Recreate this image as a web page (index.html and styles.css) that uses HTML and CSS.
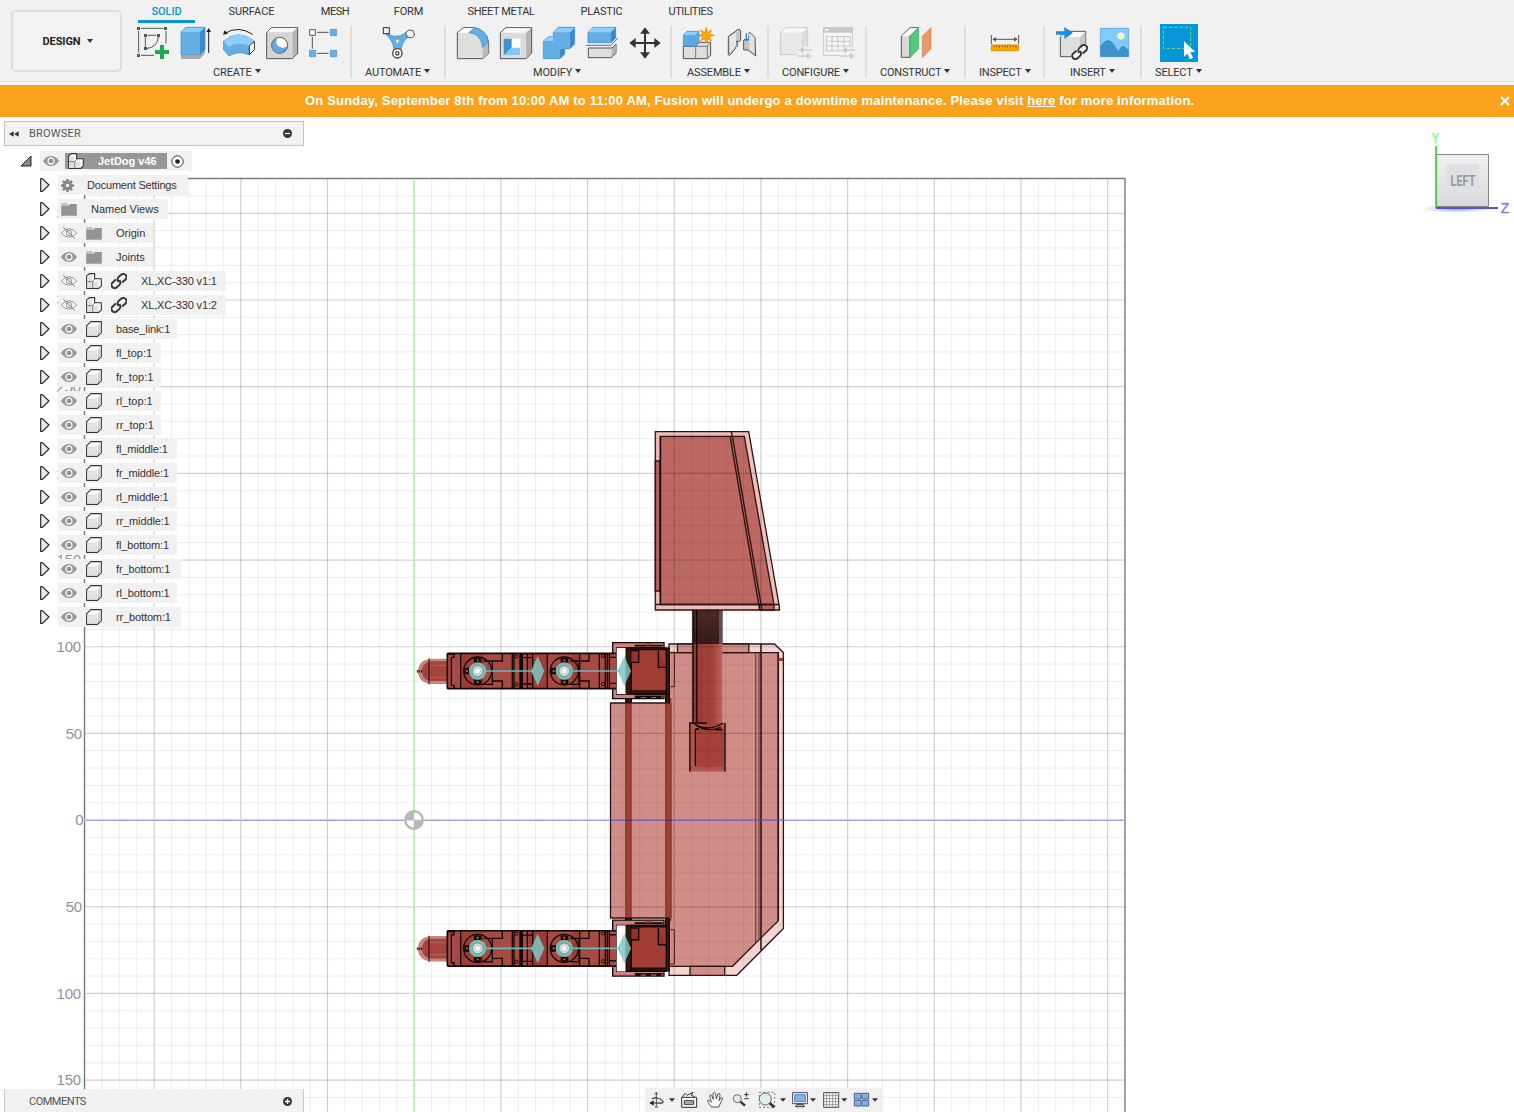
FILE: index.html
```html
<!DOCTYPE html>
<html lang="en">
<head>
<meta charset="utf-8">
<title>JetDog v46</title>
<link rel="stylesheet" href="styles.css">
</head>
<body>
<svg class="defs" width="0" height="0">
  <defs>
    <symbol id="eye" viewBox="0 0 48 32"><path d="M0 16Q10 1 24 1T48 16Q38 31 24 31T0 16Z" fill="#949494"/><circle cx="24" cy="16" r="9" fill="none" stroke="#f2f2f2" stroke-width="4"/></symbol>
    <symbol id="eye-off" viewBox="0 0 48 36"><path d="M1 18Q11 5 24 5T47 18Q37 31 24 31T1 18Z" fill="none" stroke="#999" stroke-width="3"/><circle cx="24" cy="18" r="8" fill="none" stroke="#999" stroke-width="3"/><path d="M7 1L42 35" stroke="#777" stroke-width="3"/></symbol>
    <symbol id="folder" viewBox="0 0 48 40"><path d="M0 1H20V5H0Z" fill="#aaa"/><path d="M0 8H23L27 3H48V39H0Z" fill="#949494"/></symbol>
    <symbol id="box" viewBox="0 0 50 50"><path d="M2 15L15 2H48V36L36 48H2Z" fill="#fff" stroke="#333" stroke-width="3.4" stroke-linejoin="round"/><path d="M5 17H34V45H5Z" fill="#e0e1e6"/><path d="M36 16L46 6V35L36 45Z" fill="#cfd0d6"/></symbol>
    <symbol id="parts" viewBox="0 0 50 50"><path d="M2 10L10 2H27V18H48V40L40 48H2Z" fill="#fafafc" stroke="#333" stroke-width="3.4" stroke-linejoin="round"/><path d="M4 28H19V46H4ZM23 28H38V46H23ZM4 12H19V26H4Z" fill="#e0e1e6"/><path d="M21 46V26L28 19M4 27H20" fill="none" stroke="#555" stroke-width="2.4"/></symbol>
    <symbol id="link" viewBox="0 0 50 50"><g fill="none" stroke="#333" stroke-width="6" transform="rotate(-42 25 25)"><path d="M21 15H7A10 10 0 0 0 7 35H17Q26 35 28 24M29 35H43A10 10 0 0 0 43 15H33Q24 15 22 26"/></g></symbol>
    <symbol id="tri" viewBox="0 0 30 42"><path d="M2 2H7L27 21L7 40H2Z" fill="#e6e7ea" stroke="#222" stroke-width="3.4" stroke-linejoin="round"/></symbol>
    <symbol id="sliders" viewBox="0 0 45 38"><path d="M0 11H42M0 29H42" stroke="#ccc" stroke-width="4"/><path d="M14 3V19" stroke="#a8cdeb" stroke-width="6"/><path d="M31 21V37" stroke="#c4c4c4" stroke-width="5"/></symbol>
  </defs>
</svg>

<header class="ribbon">
  <button class="workspace-button">DESIGN<i class="caret"></i></button>
  <div class="ribbon-main">
    <nav class="tabs">
      <span class="tab tab-solid">SOLID</span><span class="tab tab-surface">SURFACE</span><span class="tab tab-mesh">MESH</span><span class="tab tab-form">FORM</span><span class="tab tab-sheet">SHEET METAL</span><span class="tab tab-plastic">PLASTIC</span><span class="tab tab-utilities">UTILITIES</span>
    </nav>
    <div class="groups">
      <section class="group g-create">
        <div class="icons">
          <svg class="tool" viewBox="411 78 102 102"><g fill="none" stroke="#555" stroke-width="3"><path d="M423 85H490M416 93V158M498 93V130M423 166H462M436 112V140M443 106H468M475 110Q474 140 440 146"/></g><path d="M411 81h9v9h-9zM492 81h9v9h-9zM411 162h9v9h-9zM432 102h9v9h-9zM471 102h9v9h-9zM432 141h9v9h-9z" fill="#555"/><path d="M480 135H492V150H507V162H492V177H480V162H465V150H480Z" fill="#1eaa4b"/></svg>
          <svg class="tool" viewBox="540 78 102 102"><path d="M543 165H597L615 148V160L599 177H543Z" fill="#aaa"/><path d="M543 96L558 82H615L600 96V164H543Z" fill="#64aee6"/><path d="M543 96L558 82H615L600 96Z" fill="#8ccfff"/><path d="M600 96L615 82V148L600 164Z" fill="#3f8bc8"/><path d="M543 96L558 82H615V148L600 164H543Z" fill="none" stroke="#3d86c2" stroke-width="2"/><path d="M626 159V92" stroke="#222" stroke-width="3"/><path d="M619 96L626 84L633 96Z" fill="#222"/></svg>
          <svg class="tool" viewBox="669 78 102 102"><path d="M676 99Q716 76 758 103" fill="none" stroke="#222" stroke-width="3"/><path d="M669 104L674 91L684 101Z" fill="#222"/><path d="M670 124Q716 84 763 124V147L748 165Q716 150 687 168L670 148Z" fill="#64aee6" stroke="#3d86c2" stroke-width="2"/><path d="M671 124Q716 84 762 124L748 138Q716 124 685 140Z" fill="#8ccfff"/><path d="M748 137L763 124V149L748 164Z" fill="#fff" stroke="#333" stroke-width="3"/></svg>
          <svg class="tool" viewBox="798 78 102 102"><path d="M800 97L814 83H893V160L877 176H800Z" fill="#d5d5d5" stroke="#555" stroke-width="3"/><path d="M801 97L815 84H891L877 97Z" fill="#f6f6f6"/><path d="M878 97L891 85V160L878 174Z" fill="#b5b5b5"/><circle cx="839" cy="136" r="24" fill="#fff" stroke="#555" stroke-width="3"/><path d="M829 116A22 22 0 1 0 860 142Q847 149 835 140T829 116Z" fill="#60aae2" stroke="#3d86c2" stroke-width="2"/></svg>
          <svg class="tool" viewBox="927 78 102 102"><path d="M951 97H986M937 110V146M951 160H986" stroke="#555" stroke-width="3"/><path d="M929 89H946V106H929Z" fill="#fff" stroke="#555" stroke-width="3"/><path d="M991 88h19v19h-19zM991 151h19v19h-19zM928 151h19v19h-19z" fill="#64aee6" stroke="#4894d0" stroke-width="2"/></svg>
        </div>
        <div class="group-label">CREATE<i class="caret"></i></div>
      </section>
      <section class="group g-automate">
        <div class="icons">
          <svg class="tool" viewBox="1146 78 102 102"><path d="M1163 100Q1184 113 1190 107Q1198 112 1220 96L1230 108Q1205 122 1203 153L1206 162Q1192 180 1179 162L1182 150Q1181 124 1156 101Z" fill="#64aee6" stroke="#3d86c2" stroke-width="2"/><path d="M1184 118H1201L1192 135Z" fill="#fff" stroke="#3d86c2" stroke-width="2"/><rect x="1150" y="83" width="18" height="18" fill="#f2f2f2" stroke="#333" stroke-width="3"/><path d="M1226 90L1239 92L1244 105L1235 114L1222 111L1217 99Z" fill="#f2f2f2" stroke="#555" stroke-width="3"/><circle cx="1192" cy="160" r="14" fill="#fff" stroke="#444" stroke-width="4"/><circle cx="1192" cy="160" r="5" fill="none" stroke="#444" stroke-width="4"/></svg>
        </div>
        <div class="group-label">AUTOMATE<i class="caret"></i></div>
      </section>
      <section class="group g-modify">
        <div class="icons">
          <svg class="tool" viewBox="48 78 102 102"><path d="M52 98L70 83H102Q140 90 146 128V160L128 176H52Z" fill="#dedede" stroke="#555" stroke-width="3"/><path d="M54 98L71 85H102L86 98Z" fill="#fff"/><path d="M128 142L145 127V160L128 174Z" fill="#bbb"/><path d="M86 98L105 83Q140 90 146 127L128 142Q123 100 86 98Z" fill="#64aee6" stroke="#3d86c2" stroke-width="2"/></svg>
          <svg class="tool" viewBox="177 78 102 102"><path d="M181 98L197 83H275V160L258 176H181Z" fill="#dadada" stroke="#555" stroke-width="3"/><path d="M183 98L198 85H273L258 98Z" fill="#f7f7f7"/><path d="M258 98L273 85V160L258 174Z" fill="#b5b5b5"/><path d="M191 116H241V165H191Z" fill="#fff"/><path d="M191 116H215V143L193 165H191Z" fill="#3f91d0"/><path d="M193 165L215 143H240V165Z" fill="#82c6fa"/></svg>
          <svg class="tool" viewBox="306 78 102 102"><path d="M310 123L325 110H340V97L354 82H404V132L390 146H374V162L360 176H310Z" fill="#64aee6" stroke="#3d86c2" stroke-width="2"/><path d="M340 97L355 84H402L390 97ZM311 123L325 111H340V123Z" fill="#8ccfff"/><path d="M390 97L403 84V132L390 145ZM360 147H374V162L360 175Z" fill="#3f8bc8"/></svg>
          <svg class="tool" viewBox="435 78 102 102"><path d="M444 97L459 82H527V114L513 128H444Z" fill="#64aee6" stroke="#3d86c2" stroke-width="2"/><path d="M444 97L459 83H526L513 97Z" fill="#8ccfff"/><path d="M513 97L527 83V114L513 128Z" fill="#3f8bc8"/><path d="M438 136H513L534 114" fill="none" stroke="#0f86df" stroke-width="3"/><path d="M445 144H516L528 132V160L513 173H445Z" fill="#dedede" stroke="#555" stroke-width="3"/><path d="M515 146L527 134V159L515 170Z" fill="#b5b5b5"/></svg>
          <svg class="tool" viewBox="564 78 102 102"><path d="M615 92V168M578 129H652" stroke="#333" stroke-width="6"/><path d="M615 82L630 101H600ZM615 176L630 157H600ZM568 129L587 114V144ZM662 129L643 114V144Z" fill="#333"/></svg>
        </div>
        <div class="group-label">MODIFY<i class="caret"></i></div>
      </section>
      <section class="group g-assemble">
        <div class="icons">
          <svg class="tool" viewBox="726 78 102 102"><path d="M730 139H766L778 127H812V165L802 176H730Z" fill="#ddd" stroke="#555" stroke-width="3"/><path d="M767 139V176M767 139H802L811 130M802 139V175" fill="none" stroke="#777" stroke-width="3"/><path d="M730 105L741 94H777V128L766 139H730Z" fill="#5da8e0" stroke="#3d86c2" stroke-width="2"/><path d="M731 105L741 95H776L766 105Z" fill="#8ccfff"/><path d="M799 82L803 97L815 90L808 102L823 106L808 110L815 123L803 116L799 131L794 116L781 123L788 110L774 106L789 102L781 90L794 97Z" fill="#ffa900" stroke="#dc8b00" stroke-width="2"/></svg>
          <svg class="tool" viewBox="855 78 102 102"><path d="M865 109L888 93Q890 87 899 88L902 92V121Q897 128 889 123L887 145L868 167L865 163Z" fill="#c7c7c7" stroke="#555" stroke-width="3"/><path d="M869 112L888 98V138L869 158Z" fill="#e6e6e6"/><path d="M892 124V141M919 100V120" stroke="#0b8aed" stroke-width="3"/><path d="M911 120Q918 115 926 120L928 96L945 112L947 168L924 150H911Z" fill="#c7c7c7" stroke="#555" stroke-width="3"/><path d="M928 98L943 112V161L928 149Z" fill="#e2e2e2"/><path d="M919 101V122M914 117L919 123L925 117" fill="none" stroke="#0b8aed" stroke-width="3"/></svg>
        </div>
        <div class="group-label">ASSEMBLE<i class="caret"></i></div>
      </section>
      <section class="group g-configure">
        <div class="icons">
          <svg class="tool" viewBox="57 78 102 102"><path d="M61 98L76 83H143V140L123 164H61Z" fill="#e8e8e8" stroke="#c9c9c9" stroke-width="3"/><path d="M63 98L77 85H142L127 98Z" fill="#f7f7f7"/><path d="M125 99L142 84V140H125Z" fill="#ddd"/><path d="M112 140H159V180H112Z" fill="#f1f1f1"/><use href="#sliders" x="113" y="139" width="45" height="38"/></svg>
          <svg class="tool" viewBox="186 78 102 102"><path d="M191 83H277V166H191Z" fill="#f6f6f6" stroke="#c9c9c9" stroke-width="3"/><path d="M190 82H278V98H190Z" fill="#c6c6c6"/><path d="M195 87H206V92H195Z" fill="#fff"/><path d="M199 110H270V153H199ZM199 124H270M199 138H270M216 110V153M234 110V153M252 110V153" fill="none" stroke="#c4c4c4" stroke-width="3"/><path d="M242 140H288V180H242Z" fill="#f1f1f1"/><use href="#sliders" x="242" y="139" width="45" height="38"/></svg>
        </div>
        <div class="group-label">CONFIGURE<i class="caret"></i></div>
      </section>
      <section class="group g-construct">
        <div class="icons">
          <svg class="tool" viewBox="420 78 102 102"><path d="M424 108L450 83H474L450 108V172H424Z" fill="#d9d9d9" stroke="#555" stroke-width="3"/><path d="M426 108L451 85H473L449 108Z" fill="#fff"/><path d="M450 108L476 83V146L450 173Z" fill="#58c77e" stroke="#36a95f" stroke-width="2"/><path d="M487 108L513 83V146L487 173Z" fill="#e69a68" stroke="#d57f48" stroke-width="2"/></svg>
        </div>
        <div class="group-label">CONSTRUCT<i class="caret"></i></div>
      </section>
      <section class="group g-inspect">
        <div class="icons">
          <svg class="tool" viewBox="684 78 102 102"><path d="M694 105V132M776 105V132M700 118H770" stroke="#555" stroke-width="3"/><path d="M697 118L708 111V125ZM773 118L762 111V125Z" fill="#555"/><path d="M694 135H776V152H694Z" fill="#ffaa05" stroke="#e19200" stroke-width="3"/><path d="M702 136V142M710 136V142M718 136V145M727 136V142M735 136V142M743 136V145M752 136V142M760 136V142M768 136V145" stroke="#644400" stroke-width="2"/></svg>
        </div>
        <div class="group-label">INSPECT<i class="caret"></i></div>
      </section>
      <section class="group g-insert">
        <div class="icons">
          <svg class="tool" viewBox="885 78 102 102"><path d="M901 111L919 94H977V150L958 170H901Z" fill="#dedede" stroke="#555" stroke-width="3"/><path d="M903 111L920 96H975L960 111Z" fill="#fafafa"/><path d="M960 111L976 96V150L960 168Z" fill="#c8c8c8"/><path d="M888 94H913V81L939 99L913 117V104H888Z" fill="#188ce5"/><path d="M934 160L968 132H986V180H934Z" fill="#f1f1f1"/><use href="#link" x="933" y="132" width="52" height="48"/></svg>
          <svg class="tool" viewBox="1014 78 102 102"><path d="M1021 85H1106V170H1021Z" fill="#80caff" stroke="#4a9bd5" stroke-width="2"/><path d="M1021 138Q1046 104 1065 138L1075 153Q1084 134 1093 139L1106 151V170H1021Z" fill="#3e91cc"/><circle cx="1083" cy="108" r="10" fill="#fff9b0" stroke="#fff" stroke-width="2"/></svg>
        </div>
        <div class="group-label">INSERT<i class="caret"></i></div>
      </section>
      <section class="group g-select">
        <div class="icons">
          <svg class="tool tool-active" viewBox="1200 72 114 114"><path d="M1200 72H1314V186H1200Z" fill="#0696d7"/><path d="M1210 82H1292V146H1210Z" fill="none" stroke="#6bdc86" stroke-width="3" stroke-dasharray="11 5"/><path d="M1272 124V170L1282 161L1290 178L1299 173L1291 157L1305 155Z" fill="#fff"/></svg>
        </div>
        <div class="group-label">SELECT<i class="caret"></i></div>
      </section>
    </div>
  </div>
</header>

<div class="banner"><p>On Sunday, September 8th from 10:00 AM to 11:00 AM, Fusion will undergo a downtime maintenance. Please visit <a>here</a> for more information.</p><svg class="close" viewBox="0 0 10 10"><path d="M1 1L9 9M9 1L1 9" stroke="#fff" stroke-width="2.2"/></svg></div>

<main class="workspace">
  <svg class="viewport" viewBox="0 117 1514 995">
    <defs>
      <linearGradient id="neck" x1="0" x2="1"><stop offset="0" stop-color="#8d352f"/><stop offset=".2" stop-color="#9c3c35"/><stop offset=".7" stop-color="#a4443d"/><stop offset="1" stop-color="#bb6660"/></linearGradient>
      <linearGradient id="neckdark" x1="0" x2="0" y1="0" y2="1"><stop offset="0" stop-color="#4d2a29"/><stop offset="1" stop-color="#341b1a"/></linearGradient>
      <g id="servo">
        <circle cx="233" cy="123" r="42" fill="none" stroke="#140806" stroke-width="4"/>
        <g fill="#b6554c" stroke="#140806" stroke-width="5"><circle cx="233" cy="91" r="6"/><circle cx="233" cy="156" r="6"/><circle cx="201" cy="123" r="6"/></g>
        <path d="M224 84V98M243 84V98M224 148V162M243 148V162M193 115H207M193 131H207M250 93H277V163H250M277 93H307V70M277 153H307V176" fill="none" stroke="#140806" stroke-width="4"/>
        <path d="M257 123H400" stroke="#68bab5" stroke-width="5"/>
        <circle cx="233" cy="123" r="26" fill="#72bbb6"/><circle cx="233" cy="123" r="16" fill="#ddd" stroke="#777" stroke-width="2"/><circle cx="233" cy="123" r="9" fill="#fff" stroke="#aaa" stroke-width="2"/>
        <path d="M413 79L433 123L413 167L393 123Z" fill="#7cc7c3" fill-opacity=".85"/>
      </g>
      <g id="leg">
        <path d="M142 86H90Q54 92 54 124T90 162H142Z" fill="#c8837e"/>
        <path d="M142 94H90Q66 100 66 124T90 153H142Z" fill="#a4443c"/><path d="M90 106H142M90 142H142" stroke="#b6665f" stroke-width="3"/>
        <path d="M87 85V163M52 120V128M58 120V128M64 120V128" stroke="#140806" stroke-width="3"/>
        <path d="M638 38H792V54H650V192H792V206H638Z" fill="#cd827d" stroke="#140806" stroke-width="4"/>
        <path d="M650 54H678V192H650Z" fill="#fff"/>
        <path d="M142 70H648V176H142Z" fill="#a54b43"/>
        <path d="M182 70H250V176H182ZM385 70H442V176H385ZM516 70H538V176H516Z" fill="#98362f" fill-opacity=".6"/>
        <path d="M142 70H648M142 176H648M142 70V176" fill="none" stroke="#140806" stroke-width="5"/>
        <path d="M146 73H162V82H154V166H162V174M182 70V176M337 70V176M342 70V176M360 70V176M363 70V176M367 70V176M382 70V176M398 70V176M442 70V176M539 70V176M598 70V176M616 70V176M622 70V176M628 70V176M367 83H398M367 162H398M628 82H648M628 160H648" fill="none" stroke="#140806" stroke-width="4"/>
        <g fill="none" stroke="#140806" stroke-width="3"><circle cx="349" cy="79" r="5"/><circle cx="349" cy="163" r="5"/><circle cx="609" cy="78" r="5"/><circle cx="609" cy="162" r="5"/></g>
        <path d="M678 54H694V191H678ZM797 54H808V191H797Z" fill="#381511" stroke="#140806" stroke-width="3"/>
        <path d="M811 67H823V170H811" fill="none" stroke="#3c1b18" stroke-width="3"/>
        <path d="M694 54H799V192H694Z" fill="#a13c34" stroke="#140806" stroke-width="4"/>
        <path d="M694 58H799M694 183H799M694 189H799" fill="none" stroke="#140806" stroke-width="5"/>
        <path d="M704 47H788M704 199H788" stroke="#140806" stroke-width="5"/><path d="M706 203H722M738 203H753M769 203H783" stroke="#140806" stroke-width="6"/>
        <path d="M694 62H716V97H694M775 62V112H798" fill="#963129" stroke="#140806" stroke-width="4"/>
        <path d="M738 40H753V47H738Z" fill="#a13c34"/>
        <use href="#servo"/><use href="#servo" x="260"/>
      </g>
    </defs>

    <g class="axis-labels">
      <text x="81" y="218.500">350</text><text x="81" y="304.500">300</text><text x="81" y="391.500">250</text><text x="81" y="478.500">200</text><text x="81" y="564.500">150</text><text x="81" y="651.500">100</text><text x="82" y="738.500">50</text><text x="83.500" y="824.500">0</text><text x="82" y="911.500">50</text><text x="81" y="998.500">100</text><text x="81" y="1084.500">150</text>
    </g>

    <g class="body" stroke="#2b1513" stroke-width="1.300">
      <path d="M669 644H774.5L783.4 652.5V928.5L736.8 975.3H669Z" fill="#f3d5d3"/>
      <path d="M669 652.7H778.3V920.7L732.5 966.3H669Z" fill="#d08d88"/>
      <path d="M677.5 644H748.8V652.7H677.5ZM690 966.3H724.7V975.3H690Z" fill="#d08d88"/>
      <path d="M610.5 703H669V918H610.5Z" fill="#d08d88"/>
      <path d="M669 700H673V920H669Z" fill="#d08d88" stroke="none"/>
      <path d="M755.7 653V943M759 653V940" fill="none" stroke="#754744"/>
      <path d="M761 644V950M778.3 653V920" fill="none" stroke-width="1.5"/>
      <path d="M778.5 658H783V661H778.5Z" fill="#a13c34" stroke="none"/>
      <path d="M692.7 610H722.3V723H692.7Z" fill="url(#neck)" stroke="none"/>
      <path d="M692.7 610H722.3V644H692.7Z" fill="url(#neckdark)" stroke="none"/>
      <path d="M719 610H722.5V644H719Z" fill="#655050" stroke="none"/>
      <path d="M693 610V723M696.7 610V723" fill="none" stroke="#140806" stroke-width="1.4"/>
      <path d="M689.8 722.7H725V771.5H689.8Z" fill="#b25750" stroke="none"/>
      <path d="M695 729H724V767H695Z" fill="#a3413a" stroke="none"/>
      <path d="M693 723Q707 733 723 723" fill="#a4443d" stroke="none"/>
      <path d="M689.8 771.5V723H707M725 771.5V723M695.3 766V729M693 723Q707 733 723 723M696 725.5Q708 733 721 727" fill="none" stroke="#140806" stroke-width="1.3"/>
      <path d="M695.500 729H699M715.500 729.5H722" stroke="#140806" stroke-width="1.800"/>
      <path d="M655.3 431.7H748.7L779.4 607V610H655.3Z" fill="#eebfbd"/>
      <path d="M660.4 436.4H744.3L774 604.5H660.4Z" fill="#bd6863"/>
      <path d="M655.3 461H660V591H655.3ZM759.5 604.5H774V610H759.5Z" fill="#b86059"/>
      <path d="M655.3 604.5H779M730 436L759.7 610M731.2 431.7L732.3 436L762 610" fill="none" stroke-width="1.4"/>
      <path d="M660.4 436V604.5" stroke="#140806" stroke-width="1.5"/>
    </g>

    <g class="grid" fill="none">
      <path d="M84.2 645.5H1125" stroke-width="933" stroke-dasharray="1.2 16.137"/>
      <path d="M604.7 178V1112" stroke-width="1040" stroke-dasharray="1.2 16.137"/>
      <path class="major" d="M153.5 645.5H1125" stroke-width="933" stroke-dasharray="1.2 85.485"/>
      <path class="major" d="M604.7 212.7V1112" stroke-width="1040" stroke-dasharray="1.2 85.485"/>
    </g>
    <path d="M84.5 1112V178.5H1125V1112" fill="none" stroke="#7b7b7b" stroke-width="1.4"/>
    <path d="M414 179V1112" stroke="#fff" stroke-width="2"/>
    <path d="M414 179V1112" stroke="#6eee63" stroke-opacity=".55" stroke-width="1.800"/>
    <path d="M84 820.3H610M784 820.3H1125" stroke="#fff" stroke-width="2"/>
    <path d="M84 820.3H1125" stroke="#5555ea" stroke-opacity=".55" stroke-width="1.600"/>
    <path d="M625.3 698H631.5V921H625.3ZM665.3 698H671.5V921H665.3Z" fill="#9d4038"/>
    <path d="M626 703V918M631 703V918M666 703V918M671 703V918" stroke="#7b2b25" stroke-width=".8"/>
    <path d="M625 819.7H632V821H625ZM665 819.7H672V821H665Z" fill="#6b353f"/>
    <g class="origin"><circle cx="414" cy="820" r="8.8" fill="#fff" fill-opacity=".6" stroke="#b9b9b9" stroke-width="2.4"/><path d="M414 820V811A9 9 0 0 0 405 820ZM414 820V829A9 9 0 0 0 423 820Z" fill="#b9b9b9"/></g>
    <path d="M625.500 690H631.500V703H625.500ZM665.500 690H669.500V703H665.500Z" fill="#381511" stroke="#140806"/>
    <path d="M625.500 918H631.500V930H625.500ZM665.500 918H669.500V930H665.500Z" fill="#381511" stroke="#140806"/>
    <use href="#leg" transform="translate(400 630) scale(.33333)"/>
    <use href="#leg" transform="translate(400 907.4) scale(.33333)"/>
  </svg>

  <div class="overlay">
    <div class="overlay-top">
      <aside class="browser">
        <div class="panel-head"><svg class="collapse" viewBox="0 0 30 16"><path d="M0 8L14 0V16ZM15 8L29 0V16Z" fill="#333"/></svg><span class="panel-title">BROWSER</span><svg class="dot" viewBox="0 0 28 28"><circle cx="14" cy="14" r="14" fill="#333"/><path d="M6 14H22" stroke="#fff" stroke-width="4"/></svg></div>
        <ul class="tree">
          <li class="row root"><svg class="open" viewBox="0 0 36 36"><path d="M33 3V33H3Z" fill="#888" stroke="#222" stroke-width="3"/></svg><div class="chip"><svg class="eye"><use href="#eye"/></svg><div class="selected"><svg class="ico"><use href="#parts"/></svg><b>JetDog v46</b></div><svg class="radio" viewBox="0 0 39 39"><circle cx="19.500" cy="19.500" r="17" fill="#fff" stroke="#333" stroke-width="3"/><circle cx="19.500" cy="19.500" r="7" fill="#222"/></svg></div></li>
          <li class="row"><svg class="tri"><use href="#tri"/></svg><div class="chip w-doc"><svg class="gear" viewBox="0 0 40 40"><circle cx="20" cy="20" r="10" fill="none" stroke="#858585" stroke-width="9"/><path d="M20 0V8M20 32V40M0 20H8M32 20H40M6 6L12 12M28 28L34 34M34 6L28 12M12 28L6 34" stroke="#858585" stroke-width="8"/></svg><span>Document Settings</span></div></li>
          <li class="row"><svg class="tri"><use href="#tri"/></svg><div class="chip w-views"><svg class="folder"><use href="#folder"/></svg><span>Named Views</span></div></li>
          <li class="row"><svg class="tri"><use href="#tri"/></svg><div class="chip w-folder"><svg class="eye"><use href="#eye-off"/></svg><svg class="folder"><use href="#folder"/></svg><span>Origin</span></div></li>
          <li class="row"><svg class="tri"><use href="#tri"/></svg><div class="chip w-folder"><svg class="eye"><use href="#eye"/></svg><svg class="folder"><use href="#folder"/></svg><span>Joints</span></div></li>
          <li class="row"><svg class="tri"><use href="#tri"/></svg><div class="chip w-linked"><svg class="eye"><use href="#eye-off"/></svg><svg class="ico"><use href="#parts"/></svg><svg class="ico"><use href="#link"/></svg><span>XL,XC-330 v1:1</span></div></li>
          <li class="row"><svg class="tri"><use href="#tri"/></svg><div class="chip w-linked"><svg class="eye"><use href="#eye-off"/></svg><svg class="ico"><use href="#parts"/></svg><svg class="ico"><use href="#link"/></svg><span>XL,XC-330 v1:2</span></div></li>
          <li class="row"><svg class="tri"><use href="#tri"/></svg><div class="chip w-mid"><svg class="eye"><use href="#eye"/></svg><svg class="ico"><use href="#box"/></svg><span>base_link:1</span></div></li>
          <li class="row"><svg class="tri"><use href="#tri"/></svg><div class="chip w-top"><svg class="eye"><use href="#eye"/></svg><svg class="ico"><use href="#box"/></svg><span>fl_top:1</span></div></li>
          <li class="row"><svg class="tri"><use href="#tri"/></svg><div class="chip w-top"><svg class="eye"><use href="#eye"/></svg><svg class="ico"><use href="#box"/></svg><span>fr_top:1</span></div></li>
          <li class="row"><svg class="tri"><use href="#tri"/></svg><div class="chip w-top"><svg class="eye"><use href="#eye"/></svg><svg class="ico"><use href="#box"/></svg><span>rl_top:1</span></div></li>
          <li class="row"><svg class="tri"><use href="#tri"/></svg><div class="chip w-top"><svg class="eye"><use href="#eye"/></svg><svg class="ico"><use href="#box"/></svg><span>rr_top:1</span></div></li>
          <li class="row"><svg class="tri"><use href="#tri"/></svg><div class="chip w-mid"><svg class="eye"><use href="#eye"/></svg><svg class="ico"><use href="#box"/></svg><span>fl_middle:1</span></div></li>
          <li class="row"><svg class="tri"><use href="#tri"/></svg><div class="chip w-mid"><svg class="eye"><use href="#eye"/></svg><svg class="ico"><use href="#box"/></svg><span>fr_middle:1</span></div></li>
          <li class="row"><svg class="tri"><use href="#tri"/></svg><div class="chip w-mid"><svg class="eye"><use href="#eye"/></svg><svg class="ico"><use href="#box"/></svg><span>rl_middle:1</span></div></li>
          <li class="row"><svg class="tri"><use href="#tri"/></svg><div class="chip w-mid"><svg class="eye"><use href="#eye"/></svg><svg class="ico"><use href="#box"/></svg><span>rr_middle:1</span></div></li>
          <li class="row"><svg class="tri"><use href="#tri"/></svg><div class="chip w-mid"><svg class="eye"><use href="#eye"/></svg><svg class="ico"><use href="#box"/></svg><span>fl_bottom:1</span></div></li>
          <li class="row"><svg class="tri"><use href="#tri"/></svg><div class="chip w-wide"><svg class="eye"><use href="#eye"/></svg><svg class="ico"><use href="#box"/></svg><span>fr_bottom:1</span></div></li>
          <li class="row"><svg class="tri"><use href="#tri"/></svg><div class="chip w-mid"><svg class="eye"><use href="#eye"/></svg><svg class="ico"><use href="#box"/></svg><span>rl_bottom:1</span></div></li>
          <li class="row"><svg class="tri"><use href="#tri"/></svg><div class="chip w-wide"><svg class="eye"><use href="#eye"/></svg><svg class="ico"><use href="#box"/></svg><span>rr_bottom:1</span></div></li>
        </ul>
      </aside>
      <svg class="viewcube" viewBox="1414 121 100 100">
        <defs><linearGradient id="face" x1="0" x2="0" y1="0" y2="1"><stop offset="0" stop-color="#f0f0f0"/><stop offset="1" stop-color="#d9d9d9"/></linearGradient><radialGradient id="shade"><stop offset="0" stop-color="#888" stop-opacity=".9"/><stop offset="1" stop-color="#aaa" stop-opacity="0"/></radialGradient></defs>
        <ellipse cx="1457" cy="208.500" rx="36" ry="4.500" fill="url(#shade)"/>
        <path d="M1436.500 154.500H1488.500V206.500H1436.500Z" fill="url(#face)" stroke="#858585"/>
        <path d="M1446 164H1479V197H1446Z" fill="#dfe0e4"/>
        <text class="cube-label" x="1463" y="186" text-anchor="middle" textLength="25" lengthAdjust="spacingAndGlyphs">LEFT</text>
        <path d="M1436 146V208" stroke="#3fd73f" stroke-width="1.800"/><path d="M1436 208H1498" stroke="#5252e6" stroke-width="2.200"/>
        <text class="axis-y" x="1435.500" y="142.500" text-anchor="middle" textLength="7" lengthAdjust="spacingAndGlyphs">Y</text><text class="axis-z" x="1505" y="212.500" text-anchor="middle">Z</text>
      </svg>
    </div>
    <div class="overlay-bottom">
      <div class="comments"><span class="panel-title">COMMENTS</span><svg class="dot" viewBox="0 0 28 28"><circle cx="14" cy="14" r="14" fill="#333"/><path d="M6 14H22M14 6V22" stroke="#fff" stroke-width="4"/></svg></div>
      <svg class="navbar" viewBox="135 54 711 72">
        <g fill="none" stroke="#333" stroke-width="3">
          <path d="M169 68V110M164 73L169 67L174 73M164 111H174" stroke-width="2.500"/><path d="M155 86Q162 83 172 84T188 93T170 99H154" stroke-width="3.500"/><path d="M161 91L148 99L161 107Z" fill="#222" stroke="none"/>
          <path d="M245 82H290V112H245Z" fill="#f6f6f6"/><path d="M247 81L255 70L261 76L279 67L274 76L284 80M253 92H281V103H253Z"/><path d="M255 94H279V101H255Z" fill="#999" stroke="none"/>
          <path d="M334 111L323 94Q321 88 328 91L334 97L329 77Q330 71 335 77L340 88L339 70Q344 64 347 71L349 87L354 72Q360 68 360 76L357 92L362 84Q369 81 367 88L356 111Z" fill="#fff" stroke-width="2.500"/>
          <circle cx="412" cy="86" r="12" fill="#dfeeee" stroke="#667"/><path d="M421 95L435 107" stroke-width="7"/><path d="M433 74H446M439 67V80M433 86H446"/>
          <path d="M478 67H524V112H478Z" stroke-dasharray="6 6" stroke="#777"/><circle cx="496" cy="87" r="18" fill="#dfeeee" stroke="#667"/><path d="M509 99L523 112" stroke-width="8"/>
          <path d="M578 68H622V101H578Z" fill="#fff" stroke="#445"/><path d="M584 74H616V95H584Z" fill="#89aee0" stroke="#5d86bf"/><path d="M591 103H609L613 110H587Z" fill="#ccc"/>
          <path d="M671 68H716V112H671Z" fill="#fff" stroke="#445"/><path d="M680 68V112M689 68V112M698 68V112M707 68V112M671 77H716M671 86H716M671 95H716M671 104H716" stroke="#777" stroke-width="2"/>
          <path d="M763 70H783V87H763ZM786 70H806V87H786ZM763 91H783V108H763ZM786 91H806V108H786Z" fill="#9dbde8" stroke="#3d5d88"/><path d="M769 76H777V82H769ZM792 76H800V82H792ZM769 97H777V103H769ZM792 97H800V103H792Z" stroke="#6d90c2" stroke-width="2"/>
        </g>
        <path d="M207 85H225L216 95ZM540 85H558L549 95ZM630 85H648L639 95ZM724 85H742L733 95ZM816 85H834L825 95Z" fill="#333"/>
      </svg>
    </div>
  </div>
</main>
</body>
</html>
```
FILE: styles.css
```css
* { box-sizing: border-box; }
body { margin: 0; width: 1514px; height: 1112px; overflow: hidden; background: #fff; color: #333; font: 11px "Liberation Sans", Arial, sans-serif; display: flex; flex-direction: column; }
svg { display: block; flex: none; }
.defs { height: 0; }

.ribbon { height: 85px; flex: none; display: flex; background: #f1f1f1; font-family: Roboto, sans-serif; border-bottom: 3px solid #f6f6f6; box-shadow: inset 0 -1px #dcdcdc; }
.workspace-button { width: 111px; height: 62px; margin: 10px 0 0 11px; padding: 0 0 0 2px; border: 2px solid #dedede; border-radius: 5px; background: #f2f2f2; color: #222; font: bold 11px Roboto, sans-serif; letter-spacing: -.1px; display: flex; align-items: center; justify-content: center; }
.caret { display: inline-block; border: 3.5px solid transparent; border-top: 4px solid #333; border-bottom: 0; margin-left: 3px; vertical-align: 3px; }
.workspace-button .caret { margin-left: 6px; }
.ribbon-main { display: flex; flex-direction: column; }
.tabs { display: flex; height: 23px; padding-left: 16px; margin-bottom: 1px; }
.tab { text-align: center; line-height: 24px; height: 23px; white-space: nowrap; letter-spacing: -.1px; }
.tab-solid { width: 57px; color: #0696d7; font-weight: 500; border-bottom: 3px solid #0696d7; }
.tab-surface { width: 113px; letter-spacing: 0; }
.tab-mesh { width: 54px; letter-spacing: -.4px; }
.tab-form { width: 93px; }
.tab-sheet { width: 92px; letter-spacing: -.4px; }
.tab-plastic { width: 109px; letter-spacing: -.2px; }
.tab-utilities { width: 69px; letter-spacing: -.4px; }
.groups { display: flex; height: 56px; }
.group { height: 52px; margin-top: 2px; border-right: 2px solid #dedede; }
.icons { display: flex; gap: 9px; height: 34px; align-items: center; }
.tool { width: 34px; height: 34px; }
.tool-active { width: 38px; height: 38px; }
.group-label { line-height: 14px; margin-top: 6px; white-space: nowrap; letter-spacing: -.15px; }
.g-create { width: 230px; } .g-create .icons { padding-left: 15px; } .g-create .group-label { padding-left: 91px; }
.g-automate { width: 94px; } .g-automate .icons { padding-left: 30px; } .g-automate .group-label { padding-left: 13px; }
.g-modify { width: 226px; } .g-modify .icons { padding-left: 10px; } .g-modify .group-label { padding-left: 87px; }
.g-assemble { width: 97px; } .g-assemble .icons { padding-left: 10px; } .g-assemble .group-label { padding-left: 15px; }
.g-configure { width: 98px; } .g-configure .icons { padding-left: 10px; } .g-configure .group-label { padding-left: 13px; }
.g-construct { width: 99px; } .g-construct .icons { padding-left: 33px; } .g-construct .group-label { padding-left: 13px; }
.g-inspect { width: 79px; } .g-inspect .icons { padding-left: 22px; } .g-inspect .group-label { padding-left: 13px; }
.g-insert { width: 97px; } .g-insert .icons { padding-left: 10px; } .g-insert .group-label { padding-left: 25px; }
.g-select { width: 74px; border: 0; } .g-select .icons { padding-left: 18px; } .g-select .group-label { padding-left: 13px; }
.g-construct .group-label, .g-inspect .group-label { letter-spacing: -.2px; }

.banner { height: 32px; flex: none; display: flex; align-items: center; background: #faa21b; color: #fff; font-weight: bold; font-size: 13px; padding-left: 305px; }
.banner p { margin: 0; padding-bottom: 1px; flex: 1; white-space: nowrap; letter-spacing: .175px; }
.banner a { text-decoration: underline; }
.close { width: 10px; height: 10px; margin-right: 4px; }

.workspace { flex: 1; display: grid; grid-template: 995px / 1514px; }
.viewport, .overlay { grid-area: 1 / 1; width: 1514px; height: 995px; }
.axis-labels text { font-size: 15px; fill: #929292; text-anchor: end; letter-spacing: -.2px; }
.grid path { stroke: #000; stroke-opacity: .06; }
.grid .major { stroke-opacity: .13; }
.overlay { display: flex; flex-direction: column; justify-content: space-between; }
.overlay-top { display: flex; justify-content: space-between; align-items: flex-start; padding-top: 4px; }
.browser { width: 300px; margin-left: 4px; }
.panel-head { height: 25px; display: flex; align-items: center; background: #f2f2f2; border: 1px solid #c2c2c2; padding: 0 10px 0 4px; }
.collapse { width: 10px; height: 6px; margin-right: 10px; }
.panel-title { flex: 1; font-family: Roboto, sans-serif; color: #555; letter-spacing: .2px; }
.dot { width: 9px; height: 9px; margin-right: 1px; }
.tree { list-style: none; margin: 5px 0 0; padding: 0; }
.row { height: 20px; margin-bottom: 4px; padding-left: 36px; display: flex; align-items: center; }
.row.root { padding-left: 16px; }
.tri { width: 10px; height: 14px; margin-right: 8px; }
.open { width: 12px; height: 12px; margin-right: 8px; }
.chip { height: 20px; background: #f1f1f1; display: flex; align-items: center; padding-left: 3px; white-space: nowrap; }
.root .chip { width: 152px; }
.selected { width: 102px; height: 16px; margin-left: 6px; padding-left: 3px; background: #979797; color: #fff; display: flex; align-items: center; gap: 14px; }
.radio { width: 13px; height: 13px; margin-left: 4px; }
.eye { width: 16px; height: 12px; }
.ico { width: 16px; height: 16px; margin-left: 9px; }
.selected .ico { margin-left: 0; }
.folder { width: 16px; height: 13px; }
.eye + .folder { margin-left: 9px; }
.gear { width: 13px; height: 13px; }
.chip span { margin-left: 14px; letter-spacing: -.13px; }
.chip .gear + span { margin-left: 13px; letter-spacing: -.2px; }
.w-doc { width: 130px; }
.w-views { width: 110px; }
.w-folder { width: 95px; }
.w-linked { width: 168px; }
.w-top { width: 103px; }
.w-mid { width: 119px; }
.w-wide { width: 123px; }
.w-views span, .w-folder span { letter-spacing: 0; }
.w-top span { letter-spacing: 0; }
.viewcube { width: 100px; height: 100px; }
.cube-label { font: bold 15px Roboto, sans-serif; fill: #989a9e; }
.axis-y { font: 14px "Liberation Sans", Arial, sans-serif; fill: #7df57d; stroke: #7df57d; stroke-width: .5px; }
.axis-z { font: 14px "Liberation Sans", Arial, sans-serif; fill: #8383ee; stroke: #8383ee; stroke-width: .5px; }
.overlay-bottom { display: flex; align-items: flex-end; }
.comments { width: 300px; height: 23px; margin: 0 341px 0 4px; padding: 1px 10px 0 24px; display: flex; align-items: center; background: #f1f1f1; border: 1px solid #c8c8c8; border-width: 0 1px; }
.comments .panel-title { letter-spacing: -.5px; }
.navbar { width: 237px; height: 24px; background: #f0f0f0; }
```
